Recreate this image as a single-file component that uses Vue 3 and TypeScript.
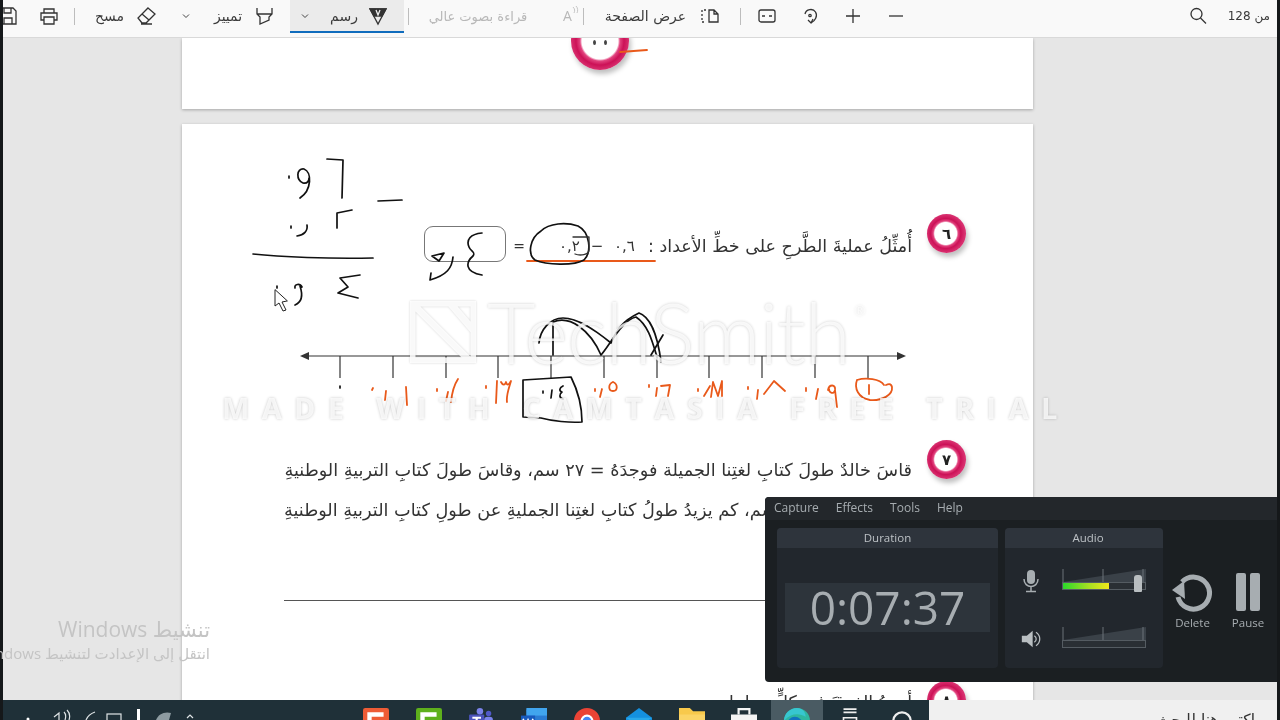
<script setup lang="ts">
const ticks = [340, 393, 446, 498, 551, 604, 657, 709, 762, 815, 868];

const orangeInk = [
  "M527 261 L655 261",
  "M620 52 L647 50",
  // 0.1
  "M373 388 L372 390 M386 391 L385 400 M406 387 L407 405",
  // 0.2
  "M437 389 L437 391 M448 392 L446 401 M458 379 C454 385 452 392 451 402",
  // 0.3
  "M486 386 L486 388 M497 381 L496 403 M501 382 C503 386 505 385 506 382 C507 386 509 385 511 381 C509 388 506 395 507 402",
  // 0.5
  "M595 389 L595 391 M602 389 L600 397 M613 382 C608 384 608 391 613 391 C618 391 618 384 613 382",
  // 0.6
  "M649 385 L649 387 M657 388 L656 396 M661 386 L670 385 L668 396",
  // 0.7
  "M698 389 L698 391 M704 396 L710 386 M711 397 L713 382 L718 396 L722 381 L722 396",
  // 0.8
  "M748 387 L748 389 M758 390 L757 399 M764 394 L774 381 L785 391",
  // 0.9
  "M806 388 L806 391 M818 389 L816 399 M828 390 C829 384 836 384 835 390 C834 395 829 393 829 389 M835 390 L837 407",
  // 1
  "M869 385 L869 394 M857 380 C866 377 880 379 884 385 M857 380 C854 388 858 398 870 400 C882 401 893 395 892 387 C891 383 888 384 886 385",
];

const blackInk = [
  // subtraction worked at the side
  "M327 159 L343 160 L342 198",
  "M300 198 C312 190 312 172 304 169 C296 168 296 180 303 183 C308 184 309 180 309 178",
  "M289 176 L289 178",
  "M378 201 L402 200",
  "M337 228 L337 213 L352 210",
  "M291 226 L291 228",
  "M307 225 C308 231 304 235 297 236",
  "M253 254 C280 257 330 259 373 258",
  "M360 275 L340 278 L348 287 L338 293 L358 298",
  "M302 287 C300 283 294 284 295 288 M300 286 C303 295 302 302 295 305",
  "M277 286 L277 288",
  // answer box
  "M482 233 C470 234 466 240 469 247 C471 252 476 252 473 256 C466 262 464 272 482 275",
  "M453 257 C452 268 447 275 430 280 L431 273",
  "M432 256 L444 253 L439 261 Z",
  "M541 231 C530 238 527 254 535 260 C546 265 574 266 584 260 C592 252 590 232 578 226 C566 222 549 223 541 231",
  // jumps on the number line
  "M539 343 C540 330 550 318 563 318 C578 318 595 330 611 343 C615 335 618 323 639 313 C648 316 657 330 661 362",
  "M553 355 L553 322 C570 315 590 330 601 355 C610 345 622 320 636 317 C648 325 652 340 657 357",
  "M651 355 L663 335",
  // zero label and box round 0.4
  "M340 386 L340 388",
  "M523 380 C540 379 555 378 571 377 C580 395 582 410 582 422 C570 423 552 421 541 418 L523 417 Z",
  "M543 391 L543 393 M552 390 L551 398 M563 386 C559 388 559 391 562 392 C559 394 559 398 563 399",
];
</script>

<template>
  <div class="screen">
    <header class="toolbar">
      <span class="tb-text count">من 128</span>
      <svg class="ico ms-21" viewBox="0 0 20 20"><circle cx="8.5" cy="8" r="5.5" /><path d="M12.5 12 L18 17.5" /></svg>
      <svg class="ico ms-282" viewBox="0 0 20 20"><path d="M3 10 H17" /></svg>
      <svg class="ico ms-23" viewBox="0 0 20 20"><path d="M3 10 H17 M10 3 V17" /></svg>
      <svg class="ico ms-23" viewBox="0 0 20 20"><path d="M5 8 C6 3 13 2 15.500 6 C18 10 15 15 11 17 M8 14 L11 17 L13 13" /><circle cx="10" cy="9.500" r="1.200" /></svg>
      <svg class="ico ms-23" viewBox="0 0 20 20"><rect x="2" y="4" width="16" height="12" rx="2" /><path d="M5 10 H8 M12 10 H15" /></svg>
      <i class="sep ms-16"></i>
      <svg class="ico ms-20" viewBox="0 0 20 20"><path d="M9 4 H14 L18 8 V16 H9 Z M14 4 V8 H18" /><path d="M6 4 H2 V16 H6" stroke-dasharray="2 2" /></svg>
      <span class="tb-text w-87 ms-11">عرض الصفحة</span>
      <i class="sep ms-18"></i>
      <span class="read-a ms-22">A<svg viewBox="0 0 8 10"><path d="M1 1 C3 3 3 5 2 7 M4 0 C6 2 6 5 5 7" /></svg></span>
      <span class="tb-text disabled w-100 ms-13">قراءة بصوت عالي</span>
      <i class="sep ms-19"></i>

      <div class="draw ms-4">
        <svg class="ico" viewBox="0 0 20 20"><path d="M2 3 H18 L10 18 Z" /><path d="M2 3 H18 L14 10 H6 Z" fill="#333" /><path d="M8 4 L10 9 L12 4" class="light" /></svg>
        <span class="tb-text w-30 ms-9">رسم</span>
        <svg class="chev" viewBox="0 0 10 10"><path d="M2 3.500 L5 6.500 L8 3.500" /></svg>
      </div>

      <svg class="ico ms-16" viewBox="0 0 20 20"><path d="M3 2 V8 L6 11 V18 L15 14 V11 L18 8 V2 M3 8 H18" /></svg>
      <span class="tb-text w-30 ms-11">تمييز</span>
      <svg class="chev ms-22" viewBox="0 0 10 10"><path d="M2 3.500 L5 6.500 L8 3.500" /></svg>
      <svg class="ico ms-25" viewBox="0 0 20 20"><path d="M12 2 L19 8 L10 17 H6 L2 12 Z M6 8 L13 14 M5 18 H16" /></svg>
      <span class="tb-text w-31 ms-11">مسح</span>
      <i class="sep ms-19"></i>
      <svg class="ico ms-15" viewBox="0 0 20 20"><path d="M5 7 V3 H15 V7 M5 14 H2 V7 H18 V14 H15 M5 11 H15 V18 H5 Z" /></svg>
      <svg class="ico ms-21" viewBox="0 0 20 20"><path d="M2 2 H15 L18 5 V18 H2 Z M6 18 V12 H14 V18 M6 2 V7 H13 V2" /></svg>
    </header>

    <main class="viewer">
      <section class="page page-top">
        <div class="ball big"><i></i><i></i></div>
      </section>

      <section class="page page-main">
        <div class="row q6">
          <div class="ball"><span>٦</span></div>
          <p class="q-text">أُمثِّلُ عمليةَ الطَّرحِ على خطِّ الأعداد :</p>
          <p class="q-sum">٠,٦ − ٠,٢</p>
          <p class="q-eq">=</p>
          <div class="answer-box"></div>
        </div>

        <svg class="number-line" viewBox="300 345 606 40">
          <path d="M302 356 H904" class="axis" />
          <path d="M300 356 L309 352 V360 Z M906 356 L897 352 V360 Z" class="arrow" />
          <path v-for="t in ticks" :key="t" :d="`M${t} 356 V378`" class="axis" />
        </svg>

        <div class="row q7">
          <div class="ball"><span>٧</span></div>
          <div class="q-lines">
            <p>قاسَ خالدٌ طولَ كتابِ لغتِنا الجميلة فوجدَهُ = ٢٧ سم، وقاسَ طولَ كتابِ التربيةِ الوطنيةِ</p>
            <p class="end">سم، كم يزيدُ طولُ كتابِ لغتِنا الجمليةِ عن طولِ كتابِ التربيةِ الوطنيةِ</p>
          </div>
        </div>

        <div class="answer-line"></div>

        <div class="row q8">
          <div class="ball"><span>٨</span></div>
          <p class="q-text">أوجدُ الفرقَ في كلٍّ مما يلي</p>
        </div>
      </section>
    </main>

    <footer class="taskbar">
      <div class="task-dark">
        <svg class="tray" viewBox="0 0 347 20">
          <circle cx="25" cy="19" r="1.500" fill="#fff" />
          <path d="M51 17 L56 13 V20 M61 12 C63 14 63 17 62 20 M64 10 C67 13 67 17 66 20" class="tray-line" />
          <path d="M83 20 C85 15 89 13 92 12" class="tray-line" />
          <rect x="104" y="14" width="14" height="10" class="tray-line" />
          <rect x="134" y="9" width="3" height="11" fill="#fff" />
          <path d="M153 20 C155 14 162 11 168 13 L166 20 Z" fill="#8d9ba1" />
          <path d="M184 18 L187 15 L190 18" class="tray-line" />
        </svg>
        <span class="slot">
          <svg viewBox="0 0 24 24"><rect width="24" height="24" rx="2" fill="#ee5c36" /><path d="M19 6 H6 V20" fill="none" stroke="#fff" stroke-width="4" /></svg>
        </span>
        <span class="slot">
          <svg viewBox="0 0 24 24"><rect width="24" height="24" rx="2" fill="#5eb01c" /><path d="M19 6 H6 V20" fill="none" stroke="#fff" stroke-width="4" /></svg>
        </span>
        <span class="slot">
          <svg viewBox="0 0 24 24"><rect x="1" y="6" width="14" height="14" rx="1" fill="#4b53bc" /><rect x="15" y="8" width="8" height="12" rx="3" fill="#7b83eb" /><circle cx="11" cy="3" r="3" fill="#7b83eb" /><circle cx="19" cy="5" r="2.500" fill="#5059c9" /><path d="M4 9 H12 M8 9 V18" stroke="#fff" stroke-width="2" /></svg>
        </span>
        <span class="slot">
          <svg viewBox="0 0 24 24"><rect x="5" y="0" width="19" height="24" rx="2" fill="#2b7cd3" /><rect x="5" y="0" width="19" height="7" fill="#41a5ee" /><rect y="7" width="13" height="13" fill="#185abd" /><path d="M2 10 L4 17 L6.500 11 L9 17 L11 10" fill="none" stroke="#fff" stroke-width="1.500" /></svg>
        </span>
        <span class="slot">
          <svg viewBox="0 0 24 24"><circle cx="12" cy="12" r="12" fill="#ea4335" /><path d="M12 12 L22 18 A12 12 0 0 1 2 18 Z" fill="#34a853" /><circle cx="12" cy="12" r="5" fill="#4285f4" stroke="#fff" stroke-width="2" /></svg>
        </span>
        <span class="slot">
          <svg viewBox="0 0 24 24"><path d="M0 9 L12 0 L24 9 V24 H0 Z" fill="#1490df" /><path d="M0 9 L12 17 L24 9" fill="#28a8ea" /></svg>
        </span>
        <span class="slot">
          <svg viewBox="0 0 24 24"><path d="M0 0 H10 L13 3 H24 V24 H0 Z" fill="#f8c94b" /><rect y="6" width="24" height="18" fill="#fbd466" /></svg>
        </span>
        <span class="slot">
          <svg viewBox="0 0 24 24"><rect y="6" width="24" height="18" fill="#f4f4f4" /><path d="M7 6 V1 H17 V6" fill="none" stroke="#f4f4f4" stroke-width="2" /></svg>
        </span>
        <span class="slot active">
          <svg viewBox="0 0 24 24"><circle cx="12" cy="12" r="12" fill="#2fb6a0" /><path d="M0 12 A12 12 0 0 1 12 0 C18 0 20 5 20 8 C14 4 5 5 0 12 Z" fill="#37c6d0" /><circle cx="10" cy="15" r="7" fill="#1173c0" /></svg>
        </span>
        <span class="slot">
          <svg viewBox="0 0 24 24"><path d="M6 1 H18 M6 4 H18 M6 9 H18 V22 H6 Z M4 12 V20 M20 12 V20" fill="none" stroke="#eee" stroke-width="1.500" /></svg>
        </span>
        <span class="slot">
          <svg viewBox="0 0 24 24"><circle cx="12" cy="12" r="8" fill="none" stroke="#eee" stroke-width="2" /></svg>
        </span>
      </div>
      <div class="task-search">اكتب هنا للبحث</div>
    </footer>

    <svg class="ink" viewBox="0 0 1280 720">
      <path v-for="(d, i) in orangeInk" :key="i" :d="d" class="ink-orange" />
      <path v-for="(d, i) in blackInk" :key="'k' + i" :d="d" class="ink-black" />
      <path d="M573 237 H589 V250 C589 255 580 256 575 254" class="ink-thin" />
      <path d="M275 290 L275 306 L279 303 L283 311 L286 310 L282 302 L287 301 Z" class="cursor" />
    </svg>

    <div class="mark-logo">
      <svg viewBox="0 0 66 62"><path d="M2 2 H64 V60 H2 Z M2 2 L60 60 M40 2 L64 30" /></svg>
      <span>TechSmith</span><sup>®</sup>
    </div>
    <div class="mark-trial">MADE WITH CAMTASIA FREE TRIAL</div>

    <div class="activate">
      <p class="a1">تنشيط Windows</p>
      <p class="a2">انتقل إلى الإعدادت لتنشيط Windows</p>
    </div>

    <aside class="recorder">
      <nav class="rec-menu">
        <span>Capture</span><span>Effects</span><span>Tools</span><span>Help</span>
      </nav>
      <div class="rec-body">
        <section class="panel duration">
          <h4>Duration</h4>
          <div class="time-wrap"><div class="time">0:07:37</div></div>
        </section>
        <section class="panel audio">
          <h4>Audio</h4>
          <div class="audio-rows">
            <div class="audio-row">
              <svg class="a-ico" viewBox="0 0 20 24"><rect x="6" y="1" width="8" height="14" rx="4" fill="#a7adb1" /><path d="M3 10 C3 20 17 20 17 10 M10 18 V22 M5 22.500 H15" fill="none" stroke="#a7adb1" stroke-width="1.500" /></svg>
              <div class="meter">
                <svg viewBox="0 0 84 26"><path d="M1 14 L84 1 V14 Z" fill="#3a4148" /><path d="M1 1 V14 M41 1 V14 M81 1 V14" stroke="#6b7278" /></svg>
                <div class="bar"><div class="level"></div></div>
                <div class="thumb"></div>
              </div>
            </div>
            <div class="audio-row">
              <svg class="a-ico" viewBox="0 0 24 24"><path d="M1 8 H7 L14 2 V22 L7 16 H1 Z" fill="#b9bec1" /><path d="M16 8 C19 10 19 14 16 16 M18 4 C24 8 24 16 18 20" fill="none" stroke="#b9bec1" stroke-width="1.500" /></svg>
              <div class="meter">
                <svg viewBox="0 0 84 26"><path d="M1 14 L84 1 V14 Z" fill="#3a4148" /><path d="M1 1 V14 M41 1 V14 M81 1 V14" stroke="#6b7278" /></svg>
                <div class="bar"></div>
              </div>
            </div>
          </div>
        </section>
        <div class="rec-btn delete">
          <svg viewBox="0 0 44 40"><path d="M13 9 A16 16 0 1 1 9 24" fill="none" stroke="#a7adb1" stroke-width="5" /><path d="M3 17 L15 8 L16 26 Z" fill="#a7adb1" /></svg>
          <span>Delete</span>
        </div>
        <div class="rec-btn pause">
          <svg viewBox="0 0 24 40"><rect y="1" width="10" height="38" rx="2" fill="#a7adb1" /><rect x="14" y="1" width="10" height="38" rx="2" fill="#a7adb1" /></svg>
          <span>Pause</span>
        </div>
      </div>
    </aside>
  </div>
</template>

<style>
html,
body {
  margin: 0;
  background: #111;
}
</style>

<style scoped>
.screen {
  position: relative;
  display: flex;
  flex-direction: column;
  box-sizing: border-box;
  width: 1280px;
  height: 720px;
  padding: 0 3px;
  overflow: hidden;
  background: #15181a;
  font-family: "DejaVu Sans", sans-serif;
  filter: blur(0.35px);
}
p,
h4 {
  margin: 0;
}

/* toolbar */
.toolbar {
  display: flex;
  flex-shrink: 0;
  align-items: center;
  height: 38px;
  padding: 0 7px 5px 0;
  overflow: hidden;
  direction: rtl;
  background: #f9f9f9;
  border-bottom: 1px solid #d9d9d9;
  box-sizing: border-box;
}
.ico {
  flex-shrink: 0;
  width: 20px;
  height: 20px;
  fill: none;
  stroke: #333;
  stroke-width: 1.300;
}
.light {
  stroke: #eee;
}
.chev {
  flex-shrink: 0;
  width: 10px;
  height: 10px;
  fill: none;
  stroke: #444;
  stroke-width: 1;
}
.tb-text {
  flex-shrink: 0;
  color: #3a3a3a;
  font-size: 14px;
  text-align: center;
  white-space: nowrap;
}
.tb-text.count {
  width: 41px;
  font-size: 12px;
}
.tb-text.disabled {
  color: #b8b8b8;
  font-size: 13px;
}
.read-a {
  display: flex;
  flex-shrink: 0;
  direction: ltr;
  width: 20px;
  color: #b8b8b8;
  font-family: "Open Sans", sans-serif;
  font-size: 14px;
  line-height: 20px;
}
.read-a svg {
  width: 8px;
  height: 10px;
  fill: none;
  stroke: #b8b8b8;
  stroke-width: 0.800;
}
.sep {
  flex-shrink: 0;
  width: 1px;
  height: 17px;
  background: #bdbdbd;
}
.draw {
  display: flex;
  flex-shrink: 0;
  align-items: center;
  align-self: flex-start;
  box-sizing: border-box;
  width: 114px;
  height: 33px;
  padding-right: 16px;
  background: #ebebeb;
  border-bottom: 2px solid #0f6cbd;
}
.w-87 { width: 87px; }
.w-100 { width: 100px; }
.w-30 { width: 30px; }
.w-31 { width: 31px; }
.ms-4 { margin-inline-start: 4px; }
.ms-9 { margin-inline-start: 9px; }
.ms-11 { margin-inline-start: 11px; }
.ms-13 { margin-inline-start: 13px; }
.ms-15 { margin-inline-start: 15px; }
.ms-16 { margin-inline-start: 16px; }
.ms-18 { margin-inline-start: 18px; }
.ms-19 { margin-inline-start: 19px; }
.ms-20 { margin-inline-start: 20px; }
.ms-21 { margin-inline-start: 21px; }
.ms-22 { margin-inline-start: 22px; }
.ms-23 { margin-inline-start: 23px; }
.ms-25 { margin-inline-start: 25px; }
.ms-282 { margin-inline-start: 282px; }
.draw .chev { margin-inline-start: 19px; }

/* document */
.viewer {
  flex: 1;
  min-height: 0;
  padding-left: 179px;
  overflow: hidden;
  background: #e6e6e6;
}
.page {
  position: relative;
  width: 851px;
  background: #fff;
  box-shadow: 0 1px 3px rgba(0, 0, 0, 0.28);
}
.page-top {
  display: flex;
  height: 71px;
  margin-bottom: 15px;
  overflow: hidden;
}
.page-main {
  height: 640px;
  padding-top: 90px;
  box-sizing: border-box;
}
.row {
  display: flex;
  direction: rtl;
  padding-right: 67px;
}
.ball {
  display: flex;
  flex-shrink: 0;
  align-items: center;
  justify-content: center;
  box-sizing: border-box;
  width: 39px;
  height: 39px;
  margin-left: 15px;
  border-radius: 50%;
  background: radial-gradient(circle at 48% 50%, #fff 0 11px, #e2447f 12.500px, #cc1157 15px, #d8306f 19px);
  box-shadow: 2px 4px 5px rgba(0, 0, 0, 0.25);
  color: #222;
  font-size: 15px;
  font-weight: 700;
}
.ball.big {
  gap: 8px;
  width: 58px;
  height: 58px;
  margin: -26px 0 0 389px;
  background: radial-gradient(circle at 50% 50%, #fff 0 18px, #e2447f 20px, #cc1157 24px, #d8306f 29px);
}
.ball.big i {
  width: 3px;
  height: 5px;
  margin-top: 3px;
  border-radius: 50%;
  background: #444;
}
.q6 {
  height: 48px;
}
.q-text {
  flex-shrink: 0;
  width: 257px;
  margin-top: 20px;
  color: #333;
  font-size: 17.500px;
  line-height: 24px;
  white-space: nowrap;
}
.q-sum {
  flex-shrink: 0;
  box-sizing: border-box;
  width: 128px;
  margin-top: 20px;
  padding-left: 12px;
  color: #333;
  font-size: 15px;
  line-height: 24px;
  letter-spacing: 7px;
  word-spacing: 6px;
  text-align: center;
  white-space: nowrap;
}
.q-eq {
  flex-shrink: 0;
  box-sizing: border-box;
  width: 21px;
  margin-top: 20px;
  padding-right: 2px;
  color: #333;
  font-size: 14px;
  line-height: 24px;
}
.answer-box {
  flex-shrink: 0;
  box-sizing: border-box;
  width: 82px;
  height: 36px;
  margin-top: 12px;
  border: 1px solid #777;
  border-radius: 9px;
}
.number-line {
  display: block;
  width: 606px;
  height: 40px;
  margin: 83px 0 0 118px;
  overflow: visible;
}
.axis {
  fill: none;
  stroke: #333;
  stroke-width: 1.200;
}
.arrow {
  fill: #333;
}
.q7 {
  margin-top: 55px;
}
.q-lines {
  width: 628px;
  margin-top: 10px;
  color: #333;
  font-size: 17.700px;
  line-height: 40px;
  white-space: nowrap;
}
.q-lines .end {
  direction: rtl;
  text-align: left;
}
.answer-line {
  width: 628px;
  height: 1px;
  margin: 70px 0 0 102px;
  background: #555;
}
.q8 {
  margin-top: 80px;
}
.q8 .q-text {
  margin-top: 9px;
}

/* taskbar */
.taskbar {
  display: flex;
  flex-shrink: 0;
  height: 20px;
  overflow: hidden;
}
.task-dark {
  display: flex;
  width: 926px;
  background: #1f3038;
}
.tray {
  flex-shrink: 0;
  width: 347px;
  height: 20px;
}
.tray-line {
  fill: none;
  stroke: #dfe4e6;
  stroke-width: 1.200;
}
.slot {
  display: flex;
  flex-shrink: 0;
  justify-content: center;
  box-sizing: border-box;
  width: 52.600px;
  height: 20px;
  padding-top: 8px;
}
.slot svg {
  flex-shrink: 0;
  width: 26px;
  height: 26px;
}
.slot.active {
  background: #4a5b63;
}
.task-search {
  flex: 1;
  padding: 10px 22px 0 0;
  direction: rtl;
  background: #f0f0f0;
  color: #333;
  font-size: 15.500px;
  line-height: 20px;
}

/* ink, watermark, overlays */
.ink {
  position: absolute;
  top: 0;
  left: 0;
  width: 1280px;
  height: 720px;
  pointer-events: none;
}
.ink path {
  fill: none;
  stroke-linecap: round;
  stroke-linejoin: round;
}
.ink .ink-orange {
  stroke: #e9591a;
  stroke-width: 1.800;
}
.ink .ink-black {
  stroke: #111;
  stroke-width: 1.700;
}
.ink .ink-thin {
  stroke: #333;
  stroke-width: 1.300;
}
.ink .cursor {
  fill: #fff;
  stroke: #222;
  stroke-width: 1;
}
.mark-logo {
  position: absolute;
  top: 284px;
  left: 410px;
  display: flex;
  align-items: center;
  color: rgba(255, 255, 255, 0.8);
  font-family: Lato, sans-serif;
  font-size: 84px;
  font-weight: 300;
  line-height: 96px;
  letter-spacing: -1px;
  text-shadow: 0 0 3px rgba(0, 0, 0, 0.2);
}
.mark-logo svg {
  width: 66px;
  height: 62px;
  margin-right: 11px;
  fill: none;
  stroke: rgba(255, 255, 255, 0.85);
  stroke-width: 7;
  filter: drop-shadow(0 0 1px rgba(0, 0, 0, 0.2));
}
.mark-logo sup {
  align-self: flex-start;
  margin: 20px 0 0 4px;
  font-size: 14px;
  line-height: 14px;
}
.mark-trial {
  position: absolute;
  top: 390px;
  left: 222px;
  color: rgba(255, 255, 255, 0.78);
  font-family: "Open Sans", sans-serif;
  font-size: 29px;
  font-weight: 700;
  line-height: 36px;
  letter-spacing: 12.350px;
  white-space: nowrap;
  text-shadow: 0 0 3px rgba(0, 0, 0, 0.22);
}
.activate {
  position: absolute;
  top: 616px;
  right: 1070px;
  color: #c4c4c4;
  font-family: "Open Sans", "DejaVu Sans", sans-serif;
  direction: rtl;
  white-space: nowrap;
}
.a1 {
  font-size: 21px;
  line-height: 26px;
}
.a2 {
  font-size: 15px;
  line-height: 22px;
}
.recorder {
  position: absolute;
  top: 497px;
  left: 765px;
  display: flex;
  flex-direction: column;
  width: 512px;
  height: 185px;
  overflow: hidden;
  border-radius: 4px 0 0 4px;
  background: #1b1f22;
  color: #a7adb1;
  font-family: "Open Sans", sans-serif;
}
.rec-menu {
  display: flex;
  gap: 17px;
  height: 23px;
  padding-left: 9px;
  background: #23272b;
  font-size: 12px;
  line-height: 21px;
}
.rec-body {
  display: flex;
  padding: 8px 0 0 12px;
}
.panel {
  display: flex;
  flex-direction: column;
  flex-shrink: 0;
  height: 140px;
  overflow: hidden;
  border-radius: 4px;
  background: #22272d;
}
.panel h4 {
  flex-shrink: 0;
  height: 20px;
  background: #2e343c;
  color: #bcc1c5;
  font-size: 11.500px;
  font-weight: 400;
  line-height: 20px;
  text-align: center;
}
.duration {
  width: 221px;
  margin-right: 7px;
}
.time-wrap {
  padding: 35px 8px 0;
}
.time {
  height: 49px;
  background: #2d343b;
  color: #a7adb1;
  font-size: 46px;
  line-height: 49px;
  text-align: center;
}
.audio {
  width: 158px;
}
.audio h4 {
  padding-left: 8px;
}
.audio-rows {
  display: flex;
  flex-direction: column;
  gap: 32px;
  padding: 20px 0 0 16px;
}
.audio-row {
  display: flex;
  align-items: center;
  gap: 21px;
  height: 26px;
}
.a-ico {
  flex-shrink: 0;
  width: 20px;
  height: 24px;
}
.meter {
  position: relative;
  width: 84px;
  height: 26px;
}
.meter svg {
  display: block;
  width: 84px;
  height: 26px;
}
.bar {
  position: absolute;
  top: 14px;
  left: 0;
  box-sizing: border-box;
  width: 84px;
  height: 8px;
  border: 1px solid #555c62;
  background: #2a2f34;
}
.level {
  width: 56%;
  height: 100%;
  background: linear-gradient(90deg, #2bd82b, #a5e022 55%, #f3e91b);
}
.thumb {
  position: absolute;
  top: 7px;
  left: 72px;
  width: 8px;
  height: 17px;
  border-radius: 3px 3px 1px 1px;
  background: #b9bec1;
}
.rec-btn {
  display: flex;
  flex-direction: column;
  flex-shrink: 0;
  align-items: center;
  font-size: 11.500px;
}
.delete {
  width: 46px;
  margin: 45px 0 0 5px;
}
.delete svg {
  width: 44px;
  height: 40px;
}
.delete span {
  margin: 2px 0 0 3px;
  line-height: 16px;
}
.pause {
  width: 40px;
  margin: 44px 0 0 14px;
}
.pause svg {
  width: 24px;
  height: 40px;
}
.pause span {
  margin-top: 3px;
  line-height: 16px;
}
</style>
